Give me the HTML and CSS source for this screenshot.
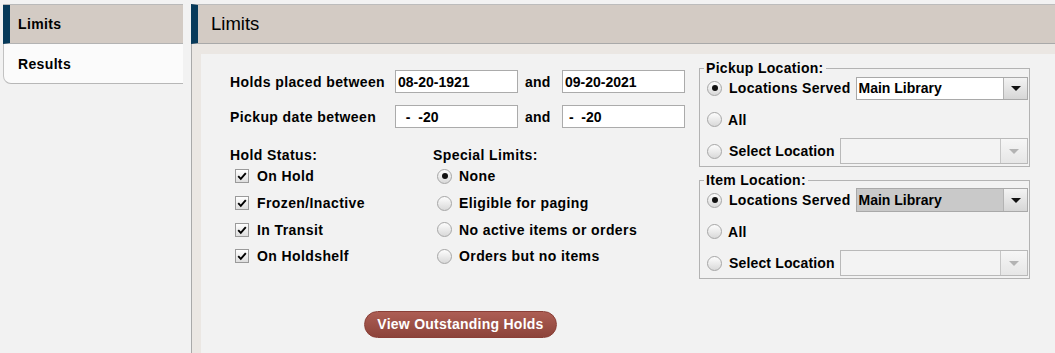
FILE: index.html
```html
<!DOCTYPE html>
<html lang="en">
<head>
<meta charset="utf-8">
<title>Limits</title>
<link rel="stylesheet" href="styles.css">
</head>
<body>
<div class="app">
  <nav class="sidebar">
    <div class="tabs">
      <div class="tab tab-active">Limits</div>
      <div class="tab tab-plain">Results</div>
    </div>
  </nav>
  <main class="main">
    <header class="main-head">Limits</header>
    <section class="panel">
      <div class="form-left">
        <div class="date-grid">
          <span class="lbl">Holds placed between</span>
          <span class="field">08-20-1921</span>
          <span class="and">and</span>
          <span class="field">09-20-2021</span>
          <span class="lbl">Pickup date between</span>
          <span class="field">  -  -20</span>
          <span class="and">and</span>
          <span class="field"> -  -20</span>
        </div>
        <div class="lists">
          <div class="list list-status">
            <div class="list-title">Hold Status:</div>
            <div class="opt"><span class="cb"><svg viewBox="0 0 14 14" width="14" height="14"><path d="M3.2 7.2 L5.8 9.9 L10.8 4.2" fill="none" stroke="#000" stroke-width="1.9"/></svg></span><span class="opt-lbl">On Hold</span></div>
            <div class="opt"><span class="cb"><svg viewBox="0 0 14 14" width="14" height="14"><path d="M3.2 7.2 L5.8 9.9 L10.8 4.2" fill="none" stroke="#000" stroke-width="1.9"/></svg></span><span class="opt-lbl">Frozen/Inactive</span></div>
            <div class="opt"><span class="cb"><svg viewBox="0 0 14 14" width="14" height="14"><path d="M3.2 7.2 L5.8 9.9 L10.8 4.2" fill="none" stroke="#000" stroke-width="1.9"/></svg></span><span class="opt-lbl">In Transit</span></div>
            <div class="opt"><span class="cb"><svg viewBox="0 0 14 14" width="14" height="14"><path d="M3.2 7.2 L5.8 9.9 L10.8 4.2" fill="none" stroke="#000" stroke-width="1.9"/></svg></span><span class="opt-lbl">On Holdshelf</span></div>
          </div>
          <div class="list list-special">
            <div class="list-title">Special Limits:</div>
            <div class="opt opt-r"><span class="radio on"></span><span class="opt-lbl">None</span></div>
            <div class="opt opt-r"><span class="radio"></span><span class="opt-lbl">Eligible for paging</span></div>
            <div class="opt opt-r"><span class="radio"></span><span class="opt-lbl">No active items or orders</span></div>
            <div class="opt opt-r"><span class="radio"></span><span class="opt-lbl">Orders but no items</span></div>
          </div>
        </div>
        <button class="btn" type="button">View Outstanding Holds</button>
      </div>
      <div class="form-right">
        <fieldset class="loc">
          <legend>Pickup Location:</legend>
          <div class="loc-row r1"><span class="radio on"></span><span class="loc-lbl">Locations Served</span>
            <span class="sel sel-a"><span class="sel-text">Main Library</span><span class="sel-btn"><span class="tri"></span></span></span></div>
          <div class="loc-row r2"><span class="radio"></span><span class="loc-lbl loc-all">All</span></div>
          <div class="loc-row r3"><span class="radio"></span><span class="loc-lbl loc-sel">Select Location</span>
            <span class="sel sel-dis"><span class="sel-text"></span><span class="sel-btn"><span class="tri"></span></span></span></div>
        </fieldset>
        <fieldset class="loc loc-item">
          <legend>Item Location:</legend>
          <div class="loc-row r1"><span class="radio on"></span><span class="loc-lbl">Locations Served</span>
            <span class="sel sel-a sel-hl"><span class="sel-text">Main Library</span><span class="sel-btn"><span class="tri"></span></span></span></div>
          <div class="loc-row r2"><span class="radio"></span><span class="loc-lbl loc-all">All</span></div>
          <div class="loc-row r3"><span class="radio"></span><span class="loc-lbl loc-sel">Select Location</span>
            <span class="sel sel-dis"><span class="sel-text"></span><span class="sel-btn"><span class="tri"></span></span></span></div>
        </fieldset>
      </div>
    </section>
  </main>
</div>
</body>
</html>
```

FILE: styles.css
```css
* { box-sizing: border-box; }
html, body { margin: 0; padding: 0; }
body {
  background: #f2f2f2;
  font-family: "Liberation Sans", Arial, sans-serif;
  font-size: 14px;
  color: #000;
  width: 1055px;
  height: 353px;
  overflow: hidden;
}
.app { display: flex; height: 353px; padding-top: 4px; }

/* sidebar */
.sidebar { width: 183px; flex: none; padding-left: 3px; }
.tabs { border-top: 1px solid #b9b9b9; }
.tab {
  display: flex; align-items: center;
  font-weight: bold; letter-spacing: 0.35px;
}
.tab-active {
  height: 39px;
  background: #d3cbc4;
  border-left: 7px solid #073a5a;
  border-bottom: 1px solid #b3b3b3;
  padding-left: 8px;
}
.tab-plain {
  height: 40px;
  background: #fbfbfb;
  border-left: 1px solid #c2c2c2;
  border-bottom: 1px solid #b7b7b7;
  border-bottom-left-radius: 8px;
  padding-left: 14px;
}

/* main */
.main {
  flex: 1;
  margin-left: 8px;
  border-left: 1px solid #a9a9a9;
  background: #ebe7e3;
  display: flex;
  flex-direction: column;
}
.main-head {
  height: 40px;
  margin-left: -1px;
  background: #d3cbc4;
  border-top: 1px solid #bcbcbc;
  border-bottom: 1px solid #a9a9a9;
  border-left: 7px solid #073a5a;
  padding-left: 13px;
  display: flex; align-items: center;
  font-size: 18.5px;
}
.panel {
  flex: 1;
  margin: 10px 0 0 9px;
  background: #f2f2f2;
  display: flex;
  padding: 8px 0 0 29px;
}

/* left form */
.form-left { width: 455px; flex: none; padding-top: 8px; }
.date-grid {
  display: grid;
  grid-template-columns: 165px 123px 44px 123px;
  grid-auto-rows: 23px;
  row-gap: 12px;
  align-items: center;
}
.lbl, .and, .list-title, .opt-lbl, .loc-lbl, legend {
  font-weight: bold; letter-spacing: 0.4px;
}
.and { padding-left: 7px; letter-spacing: 0.2px; }
.field {
  height: 23px;
  border: 1px solid #ababab;
  background: #fff;
  font-weight: bold;
  padding-left: 2px;
  white-space: pre;
  display: flex; align-items: center;
}
.lists { display: flex; margin-top: 19px; }
.list-status { width: 203px; }
.list-title { height: 16px; line-height: 16px; }
.opt { height: 26.7px; display: flex; align-items: center; padding-left: 5px; }
.opt-r { padding-left: 4px; }
.cb {
  width: 14px; height: 14px; flex: none;
  border: 1px solid #9a9a9a;
  background: linear-gradient(#ffffff, #dedede);
  display: flex; align-items: center; justify-content: center;
  margin-right: 8px;
}
.cb svg { display: block; margin: -1px; }
.radio {
  width: 15px; height: 15px; flex: none;
  border-radius: 50%;
  border: 1px solid #a6a6a6;
  background: linear-gradient(#fdfdfd, #d9d9d9);
  display: inline-flex; align-items: center; justify-content: center;
  margin-right: 7px;
}
.radio.on::after {
  content: "";
  width: 6px; height: 6px; border-radius: 50%;
  background: #111;
}
.btn {
  display: block;
  margin: 41px 0 0 134px;
  width: 193px; height: 27px;
  border-radius: 14px;
  border: 1px solid #8a3f37;
  background: linear-gradient(#ad5e54, #8c433a);
  color: #fff;
  font-family: "Liberation Sans", Arial, sans-serif;
  font-size: 14px; font-weight: bold; letter-spacing: 0.25px;
  padding: 0;
}

/* right form */
.form-right { width: 331px; flex: none; margin-left: 14px; }
.loc {
  margin: 0;
  min-width: 0;
  border: 1px solid #b3b3b3;
  padding: 0 1px 1px 7px;
}
.loc-item { margin-top: 7px; }
legend {
  line-height: 12px;
  padding: 0 2px;
  margin-left: -3px;
  letter-spacing: 0.3px;
}
.loc-row { display: flex; align-items: center; }
.r1 { height: 28px; }
.r2 { height: 35px; }
.r3 { height: 28px; }
.loc-lbl { white-space: nowrap; letter-spacing: 0.3px; }
.loc-sel { letter-spacing: 0.15px; }
.loc-all { margin-left: -1px; }
.sel {
  flex: 1;
  margin-left: 5px;
  display: flex;
  border: 1px solid #a9a9a9;
  background: #fff;
}
.sel-a { height: 23px; }
.sel-dis { height: 26px; background: #f3f3f3; border-color: #b9b9b9; }
.sel-hl { height: 24px; background: #c9c9c9; }
.sel-text {
  flex: 1; font-weight: bold; padding-left: 2px;
  display: flex; align-items: center; white-space: nowrap;
}
.sel-btn {
  width: 24px; flex: none;
  border-left: 1px solid #b3b3b3;
  background: linear-gradient(#f3f3f3, #d6d6d6);
  display: flex; align-items: center; justify-content: center;
}
.sel-dis .sel-btn { width: 27px; background: linear-gradient(#f6f6f6, #e6e6e6); border-left-color: #c6c6c6; }
.tri {
  width: 0; height: 0;
  border-left: 5px solid transparent;
  border-right: 5px solid transparent;
  border-top: 5px solid #111;
}
.sel-dis .tri { border-top-color: #b3b3b3; }
```
